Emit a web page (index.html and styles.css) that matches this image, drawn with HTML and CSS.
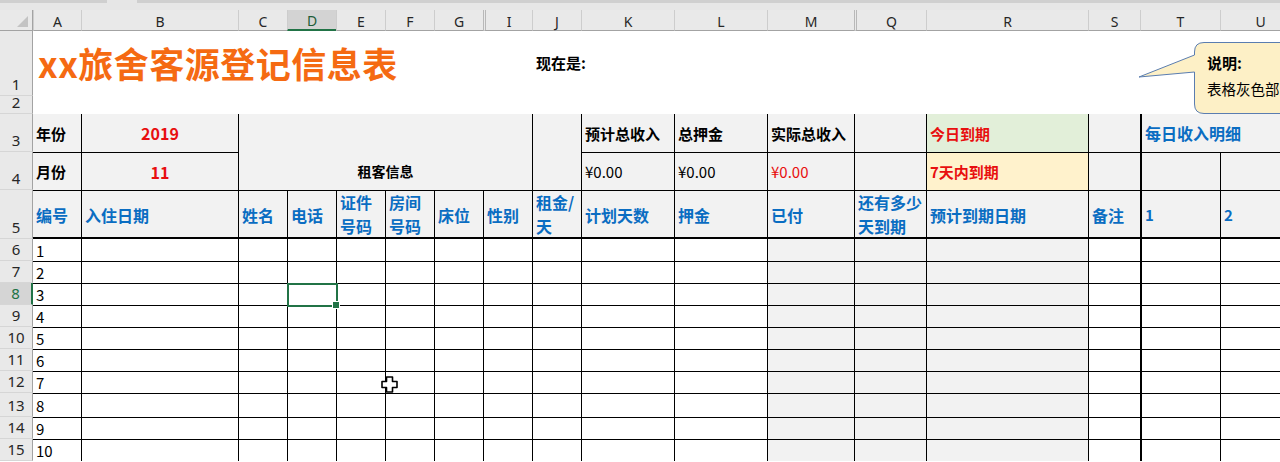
FILE: index.html
```html
<!DOCTYPE html>
<html lang="zh-CN">
<head>
<meta charset="utf-8">
<title>xx旅舍客源登记信息表</title>
<link rel="stylesheet" href="styles.css">
</head>
<body>
<div class="app">
  <div class="fbar"><span class="seg s1"></span><span class="seg s2"></span></div>
  <div class="sheet">
    <!-- column headers -->
    <div class="corner"><span class="tri"></span></div>
    <div class="ch">A</div><div class="ch">B</div><div class="ch">C</div><div class="ch sel">D</div><div class="ch">E</div><div class="ch">F</div><div class="ch">G</div><div class="ch dbl">I</div><div class="ch">J</div><div class="ch">K</div><div class="ch">L</div><div class="ch">M</div><div class="ch dbl">Q</div><div class="ch">R</div><div class="ch">S</div><div class="ch">T</div><div class="ch">U</div>

    <!-- row 1 -->
    <div class="rh">1</div>
    <div class="title">xx旅舍客源登记信息表</div>
    <div class="now">现在是:</div>
    <!-- row 2 -->
    <div class="rh">2</div>
    <div class="blank"></div>

    <!-- row 3 -->
    <div class="rh">3</div>
    <div class="c g nt nl">年份</div>
    <div class="c g nt ctr red big">2019</div>
    <div class="c g nt merge-ci">租客信息</div>
    <div class="c g nt span-r"></div>
    <div class="c g nt">预计总收入</div>
    <div class="c g nt">总押金</div>
    <div class="c g nt">实际总收入</div>
    <div class="c g nt"></div>
    <div class="c nt green red">今日到期</div>
    <div class="c g nt"></div>
    <div class="c g nt tl blue daily">每日收入明细</div>

    <!-- row 4 -->
    <div class="rh">4</div>
    <div class="c g nl">月份</div>
    <div class="c g ctr red big">11</div>
    <div class="c g n">¥0.00</div>
    <div class="c g n">¥0.00</div>
    <div class="c g n red">¥0.00</div>
    <div class="c g"></div>
    <div class="c yellow red">7天内到期</div>
    <div class="c g"></div>
    <div class="c g tl"></div>
    <div class="c g"></div>

    <!-- row 5 -->
    <div class="rh">5</div>
    <div class="c h5 nl">编号</div>
    <div class="c h5">入住日期</div>
    <div class="c h5">姓名</div>
    <div class="c h5">电话</div>
    <div class="c h5 two">证件<br>号码</div>
    <div class="c h5 two">房间<br>号码</div>
    <div class="c h5">床位</div>
    <div class="c h5">性别</div>
    <div class="c h5 two">租金/<br>天</div>
    <div class="c h5">计划天数</div>
    <div class="c h5">押金</div>
    <div class="c h5">已付</div>
    <div class="c h5 two">还有多少<br>天到期</div>
    <div class="c h5">预计到期日期</div>
    <div class="c h5">备注</div>
    <div class="c h5 tl sm">1</div>
    <div class="c h5 sm">2</div>

    <!-- row 6 -->
    <div class="rh">6</div>
    <div class="c d nl nt">1</div>
    <div class="c nt"></div><div class="c nt"></div><div class="c nt"></div><div class="c nt"></div><div class="c nt"></div><div class="c nt"></div><div class="c nt"></div><div class="c nt"></div>
    <div class="c nt"></div><div class="c nt"></div>
    <div class="c g nt"></div><div class="c g nt"></div><div class="c g nt"></div>
    <div class="c nt"></div><div class="c nt tl"></div><div class="c nt"></div>

    <!-- row 7 -->
    <div class="rh">7</div>
    <div class="c d nl">2</div>
    <div class="c"></div><div class="c"></div><div class="c"></div><div class="c"></div><div class="c"></div><div class="c"></div><div class="c"></div><div class="c"></div>
    <div class="c"></div><div class="c"></div>
    <div class="c g"></div><div class="c g"></div><div class="c g"></div>
    <div class="c"></div><div class="c tl"></div><div class="c"></div>

    <!-- row 8 -->
    <div class="rh rsel">8</div>
    <div class="c d nl">3</div>
    <div class="c"></div><div class="c"></div><div class="c act"></div><div class="c"></div><div class="c"></div><div class="c"></div><div class="c"></div><div class="c"></div>
    <div class="c"></div><div class="c"></div>
    <div class="c g"></div><div class="c g"></div><div class="c g"></div>
    <div class="c"></div><div class="c tl"></div><div class="c"></div>

    <!-- row 9 -->
    <div class="rh">9</div>
    <div class="c d nl">4</div>
    <div class="c"></div><div class="c"></div><div class="c"></div><div class="c"></div><div class="c"></div><div class="c"></div><div class="c"></div><div class="c"></div>
    <div class="c"></div><div class="c"></div>
    <div class="c g"></div><div class="c g"></div><div class="c g"></div>
    <div class="c"></div><div class="c tl"></div><div class="c"></div>

    <!-- row 10 -->
    <div class="rh">10</div>
    <div class="c d nl">5</div>
    <div class="c"></div><div class="c"></div><div class="c"></div><div class="c"></div><div class="c"></div><div class="c"></div><div class="c"></div><div class="c"></div>
    <div class="c"></div><div class="c"></div>
    <div class="c g"></div><div class="c g"></div><div class="c g"></div>
    <div class="c"></div><div class="c tl"></div><div class="c"></div>

    <!-- row 11 -->
    <div class="rh">11</div>
    <div class="c d nl">6</div>
    <div class="c"></div><div class="c"></div><div class="c"></div><div class="c"></div><div class="c"></div><div class="c"></div><div class="c"></div><div class="c"></div>
    <div class="c"></div><div class="c"></div>
    <div class="c g"></div><div class="c g"></div><div class="c g"></div>
    <div class="c"></div><div class="c tl"></div><div class="c"></div>

    <!-- row 12 -->
    <div class="rh">12</div>
    <div class="c d nl">7</div>
    <div class="c"></div><div class="c"></div><div class="c"></div><div class="c"></div><div class="c"></div><div class="c"></div><div class="c"></div><div class="c"></div>
    <div class="c"></div><div class="c"></div>
    <div class="c g"></div><div class="c g"></div><div class="c g"></div>
    <div class="c"></div><div class="c tl"></div><div class="c"></div>

    <!-- row 13 -->
    <div class="rh">13</div>
    <div class="c d nl">8</div>
    <div class="c"></div><div class="c"></div><div class="c"></div><div class="c"></div><div class="c"></div><div class="c"></div><div class="c"></div><div class="c"></div>
    <div class="c"></div><div class="c"></div>
    <div class="c g"></div><div class="c g"></div><div class="c g"></div>
    <div class="c"></div><div class="c tl"></div><div class="c"></div>

    <!-- row 14 -->
    <div class="rh">14</div>
    <div class="c d nl">9</div>
    <div class="c"></div><div class="c"></div><div class="c"></div><div class="c"></div><div class="c"></div><div class="c"></div><div class="c"></div><div class="c"></div>
    <div class="c"></div><div class="c"></div>
    <div class="c g"></div><div class="c g"></div><div class="c g"></div>
    <div class="c"></div><div class="c tl"></div><div class="c"></div>

    <!-- row 15 -->
    <div class="rh">15</div>
    <div class="c d nl">10</div>
    <div class="c"></div><div class="c"></div><div class="c"></div><div class="c"></div><div class="c"></div><div class="c"></div><div class="c"></div><div class="c"></div>
    <div class="c"></div><div class="c"></div>
    <div class="c g"></div><div class="c g"></div><div class="c g"></div>
    <div class="c"></div><div class="c tl"></div><div class="c"></div>
  </div>

  <!-- callout shape over the sheet -->
  <div class="callout">
    <svg class="callout-shape" width="170" height="80" viewBox="0 0 170 80">
      <path d="M74 4.5 H175 V75.5 H74 Q64.5 75.5 64.5 66 V34 L9 39 L64.5 17 V14 Q64.5 4.5 74 4.5 Z" fill="#fdf0c6" stroke="#5a7db0" stroke-width="1"/>
    </svg>
    <div class="callout-title">说明:</div>
    <div class="callout-text">表格灰色部分</div>
  </div>

  <!-- mouse cursor -->
  <svg class="cursor" width="17" height="17" viewBox="0 0 17 17">
    <polygon points="5.5,1 11.5,1 11.5,5.5 16,5.5 16,11.5 11.5,11.5 11.5,16 5.5,16 5.5,11.5 1,11.5 1,5.5 5.5,5.5" fill="#fff" stroke="#000" stroke-width="1.6" stroke-linejoin="round"/>
  </svg>
</div>
</body>
</html>
```

FILE: styles.css
```css
* { box-sizing: border-box; margin: 0; padding: 0; }

html, body {
  width: 1280px;
  height: 462px;
  overflow: hidden;
  background: #fff;
}

body {
  font-family: "Noto Sans CJK SC", "Noto Sans", sans-serif;
  color: #000;
}

.app {
  position: relative;
  width: 1280px;
  height: 462px;
  overflow: hidden;
}

/* bottom edge of the formula bar */
.fbar {
  height: 10px;
  background: #e6e6e6;
  display: flex;
  gap: 30px;
}
.seg {
  height: 3px;
  background: #cfcfcf;
}
.s1 { width: 107px; }
.s2 { flex: 1; }

/* sheet grid */
.sheet {
  display: grid;
  width: 1300px;
  grid-template-columns: 33px 48px 157px repeat(7, 49px) 93px 93px 87px 72px 162px 52px 80px 80px;
  grid-template-rows: 21px 65px 18px 38px 38px 49px 22px 22px 22px 22px 22px 22px 22px 24px 22px 22px;
}

.corner {
  position: relative;
  background: #e9e9e9;
  border-right: 1px solid #a3a3a3;
  border-bottom: 1px solid #a3a3a3;
}
.tri {
  position: absolute;
  right: 4px;
  bottom: 3px;
  width: 0;
  height: 0;
  border-left: 11px solid transparent;
  border-bottom: 11px solid #c3c3c3;
}

.ch {
  background: #e9e9e9;
  border-left: 1px solid #cdcdcd;
  border-bottom: 1px solid #a3a3a3;
  display: flex;
  align-items: center;
  justify-content: center;
  padding-top: 2px;
  font-family: "Noto Sans", "Liberation Sans", sans-serif;
  font-size: 14px;
  color: #262626;
}
.ch.sel {
  background: #d3d3d3;
  border-bottom: 2px solid #217346;
  color: #1e5c38;
}
.ch.dbl {
  border-left: 3px double #b8b8b8;
}

.rh {
  background: #e9e9e9;
  border-right: 1px solid #a3a3a3;
  border-bottom: 1px solid #d6d6d6;
  display: flex;
  align-items: flex-end;
  justify-content: center;
  font-family: "Noto Sans", "Liberation Sans", sans-serif;
  font-size: 15px;
  line-height: 21px;
  color: #262626;
}
.rh.rsel {
  background: #d5d5d5;
  border-right: 2px solid #217346;
  color: #217346;
}

/* title row */
.title {
  grid-column: 2 / 10;
  display: flex;
  align-items: center;
  padding-left: 5px;
  padding-bottom: 2px;
  font-size: 35px;
  font-weight: 700;
  letter-spacing: 0.5px;
  color: #f56a12;
  white-space: nowrap;
}
.now {
  grid-column: 10 / 19;
  display: flex;
  align-items: center;
  padding-left: 4px;
  padding-bottom: 3px;
  font-size: 15px;
  font-weight: 700;
}
.blank {
  grid-column: 2 / 19;
}

/* cells */
.c {
  border-left: 1px solid #000;
  border-top: 1px solid #000;
  display: flex;
  align-items: center;
  padding-left: 3px;
  font-size: 15px;
  font-weight: 700;
  white-space: nowrap;
  background: #fff;
}
.c.g { background: #f2f2f2; }
.c.nl { border-left: none; }
.c.nt { border-top: none; }
.c.tl { border-left: 2px solid #000; }
.c.ctr { justify-content: center; padding-left: 0; }
.c.n { font-weight: 400; }
.c.d { font-weight: 400; font-size: 15px; }
.red { color: #e80f0f; }
.blue { color: #0a6dc2; }
.big { font-size: 16px; }
.green { background: #e2efd9; }
.yellow { background: #fff2cc; }

.merge-ci {
  grid-column: 4 / 10;
  grid-row: span 2;
  justify-content: center;
  align-items: flex-end;
  padding-left: 0;
  padding-bottom: 9px;
  font-size: 14px;
}
.span-r {
  grid-row: span 2;
}
.daily {
  grid-column: span 2;
  font-size: 16px;
}

.h5 {
  background: #f2f2f2;
  border-bottom: 2px solid #000;
  color: #0a6dc2;
  font-size: 16px;
  line-height: 24px;
  padding-top: 2px;
}
.h5.two {
  align-items: center;
  white-space: normal;
  padding-top: 0;
}
.h5.sm { font-size: 15px; }

/* active cell */
.act { position: relative; overflow: visible; }
.act::after {
  content: "";
  position: absolute;
  left: -1px;
  top: -1px;
  right: -2px;
  bottom: -2px;
  border: 2px solid #217346;
}
.act::before {
  content: "";
  position: absolute;
  right: -4px;
  bottom: -4px;
  width: 6px;
  height: 6px;
  background: #217346;
  border: 1px solid #fff;
  z-index: 1;
}

/* callout overlay */
.callout {
  position: absolute;
  left: 1130px;
  top: 38px;
  width: 170px;
  height: 80px;
}
.callout-shape {
  position: absolute;
  left: 0;
  top: 0;
}
.callout-title {
  position: absolute;
  left: 77px;
  top: 15px;
  font-size: 15px;
  font-weight: 700;
  line-height: 20px;
  white-space: nowrap;
}
.callout-text {
  position: absolute;
  left: 77px;
  top: 41px;
  font-size: 14.5px;
  line-height: 20px;
  white-space: nowrap;
}

/* mouse pointer */
.cursor {
  position: absolute;
  left: 381px;
  top: 376px;
}
```
